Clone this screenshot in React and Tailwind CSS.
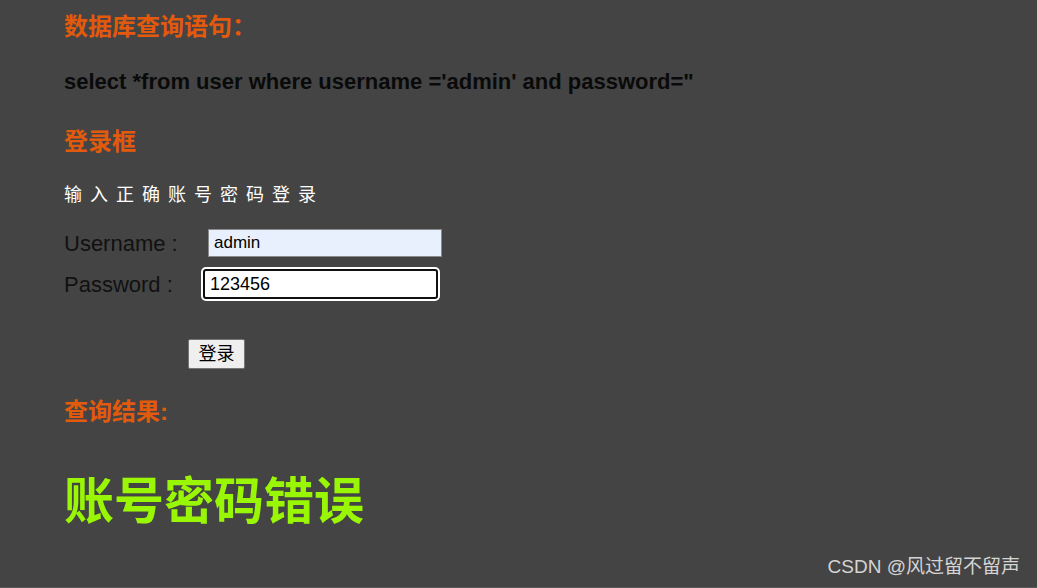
import React from 'react';

const cn = "font-['Liberation_Sans','Noto_Sans_CJK_SC',sans-serif]";

const App = () => {
    return (
        <div className={`relative w-[1037px] h-[588px] overflow-hidden bg-[#444444] ${cn}`}>
            <div className="pl-16 pt-3">
                <h3 className="h-[30px] leading-[30px] text-[24px] font-bold text-[#e35a0c]">数据库查询语句：</h3>
                <p className="mt-[25px] h-[30px] leading-[30px] text-[22px] font-bold text-[#0a0a0a]">
                    select *from user where username ='admin' and password="
                </p>
                <h3 className="mt-[30px] h-[30px] leading-[30px] text-[24px] font-bold text-[#e35a0c]">登录框</h3>
                <p className="mt-[25px] h-[26px] leading-[26px] text-[18px] tracking-[8px] text-white">输入正确账号密码登录</p>

                <div className="mt-[21px] flex items-center h-[28px]">
                    <span className="w-[144px] text-[22px] text-[#111]">Username :</span>
                    <input
                        defaultValue="admin"
                        className="w-[234px] h-[28px] px-[5px] bg-[#e8f0fe] border border-[#8a8a8a] text-[17px] text-black outline-none"
                    />
                </div>
                <div className="mt-[12px] flex items-center h-[30px]">
                    <span className="w-[139px] text-[22px] text-[#111]">Password :</span>
                    <input
                        defaultValue="123456"
                        className="w-[235px] h-[30px] px-[5px] bg-white border-2 border-[#101010] rounded-[3px] shadow-[0_0_0_2px_#ffffff] text-[18px] text-black outline-none"
                    />
                </div>

                <div className="mt-[40px] pl-[124px]">
                    <button className="w-[57px] h-[30px] bg-[#efefef] border border-[#767676] rounded-[2px] text-[18px] text-black leading-none">登录</button>
                </div>

                <h3 className="mt-[28px] h-[30px] leading-[30px] text-[24px] font-bold text-[#e35a0c]">查询结果:</h3>
                <h1 className="mt-[45px] h-[60px] leading-[60px] text-[50px] font-bold text-[#99f705]">账号密码错误</h1>
            </div>

            <div className="absolute right-[17px] bottom-[7px] text-[19px] text-[#d4d4d4]">CSDN @风过留不留声</div>
            <div className="absolute left-0 right-0 bottom-0 h-px bg-[#5a5a5a]"></div>
        </div>
    );
};

export default App;
